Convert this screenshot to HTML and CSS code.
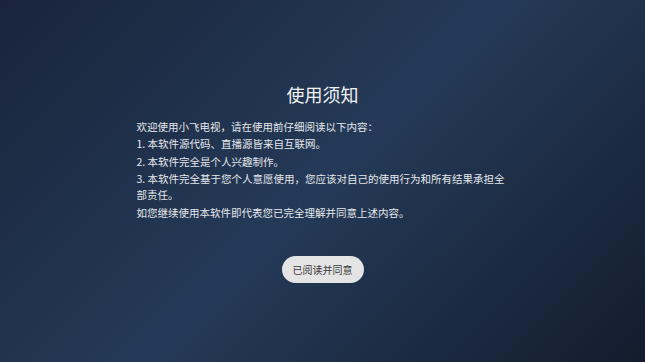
FILE: index.html
```html
<!DOCTYPE html>
<html lang="zh-CN">
<head>
<meta charset="utf-8">
<title>使用须知</title>
<link rel="stylesheet" href="styles.css">
</head>
<body>
<main class="screen">
  <section class="notice">
    <h1 class="notice-title">使用须知</h1>
    <div class="notice-body">
      <p>欢迎使用小飞电视，请在使用前仔细阅读以下内容：</p>
      <p>1. 本软件源代码、直播源皆来自互联网。</p>
      <p>2. 本软件完全是个人兴趣制作。</p>
      <p>3. 本软件完全基于您个人意愿使用，您应该对自己的使用行为和所有结果承担全部责任。</p>
      <p>如您继续使用本软件即代表您已完全理解并同意上述内容。</p>
    </div>
    <button class="agree-btn" type="button">已阅读并同意</button>
  </section>
</main>
</body>
</html>
```

FILE: styles.css
```css
html, body {
  margin: 0;
  padding: 0;
  height: 100%;
}
body {
  font-family: "Noto Sans CJK SC", "Noto Sans", sans-serif;
  background: linear-gradient(135deg, #19243a 0%, #243a58 50%, #141c2d 100%);
  color: #e6e8ec;
  overflow: hidden;
}
.screen {
  height: 100%;
  display: flex;
  align-items: center;
  justify-content: center;
}
.notice {
  width: 372px;
  display: flex;
  flex-direction: column;
  align-items: center;
  padding-top: 2px;
}
.notice-title {
  margin: 0 0 12px 0;
  font-size: 18px;
  font-weight: 400;
  line-height: 26px;
  color: #f2f3f5;
}
.notice-body {
  align-self: stretch;
  font-size: 10.5px;
  line-height: 16px;
}
.notice-body p {
  margin: 0 0 1.5px 0;
}
.agree-btn {
  margin-top: 34px;
  height: 27px;
  padding: 0 11px;
  border: none;
  border-radius: 14px;
  background: #e4e4e4;
  color: #3a3a3a;
  font-family: inherit;
  font-size: 10px;
  line-height: 27px;
}
```
